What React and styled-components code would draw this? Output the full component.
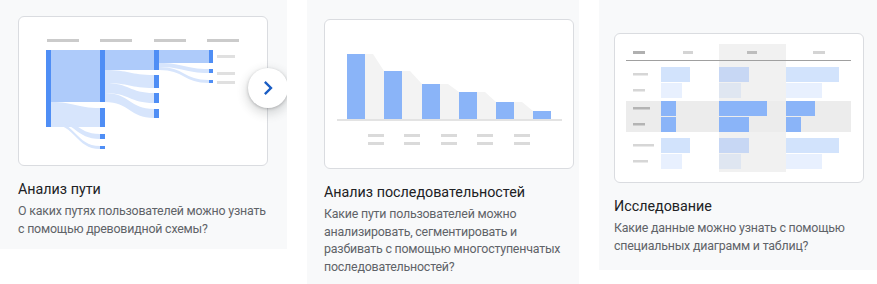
import React from "react";
import styled, { createGlobalStyle } from "styled-components";

const GlobalStyle = createGlobalStyle`
  html, body {
    margin: 0;
    padding: 0;
    background: #fff;
  }
  body {
    font-family: Roboto, "Noto Sans", Arial, sans-serif;
  }
`;

const Strip = styled.div`
  display: flex;
  align-items: flex-start;
  gap: 20px;
  width: 877px;
  height: 284px;
  overflow: hidden;
`;

const Card = styled.div`
  position: relative;
  flex: none;
  box-sizing: border-box;
  width: ${p => p.$w}px;
  padding: ${p => p.$pt}px ${p => p.$pr}px ${p => p.$pb}px ${p => p.$pl}px;
  background: #f8f9fa;
  overflow: hidden;
`;

const Preview = styled.div`
  width: 248px;
  height: 148px;
  border: 1px solid #dadce0;
  border-radius: 6px;
  background: #fff;
  overflow: hidden;

  svg {
    display: block;
  }
`;

const Title = styled.h3`
  margin: 13px 0 0;
  font-size: 14.3px;
  line-height: 20px;
  font-weight: 400;
  color: #202124;
`;

const Text = styled.p`
  margin: 3px 0 0;
  font-size: 12.4px;
  letter-spacing: -0.2px;
  line-height: 17.6px;
  color: #5f6368;
`;

const NextButton = styled.button`
  position: absolute;
  left: 248px;
  top: 68px;
  width: 40px;
  height: 40px;
  padding: 0;
  border: none;
  border-radius: 50%;
  background: #fff;
  box-shadow: 0 1px 3px rgba(60, 64, 67, 0.3), 0 4px 8px 3px rgba(60, 64, 67, 0.15);
  display: flex;
  align-items: center;
  justify-content: center;
  cursor: pointer;
`;

const flow = (x1, x2, s0, s1, t0, t1) => {
  const m = (x1 + x2) / 2;
  return `M${x1} ${s0} C${m} ${s0} ${m} ${t0} ${x2} ${t0} L${x2} ${t1} C${m} ${t1} ${m} ${s1} ${x1} ${s1} Z`;
};

const NODE = "#4f8ef5";
const FLOW_MAIN = "#aecbfa";
const FLOW_SIDE = "#d7e5fc";

const sankeyFlows = [
  [33, 82, 34, 86, 34, 86, FLOW_MAIN],
  [33, 82, 86, 111, 92, 111, FLOW_SIDE],
  [33, 82, 100, 105, 118, 123, FLOW_SIDE],
  [33, 82, 105, 108, 130, 133, FLOW_SIDE],
  [87, 136, 34, 54, 34, 54, FLOW_MAIN],
  [87, 136, 54, 67, 59, 72, FLOW_SIDE],
  [87, 136, 67, 77, 77, 87, FLOW_SIDE],
  [87, 136, 77, 86, 93, 102, FLOW_SIDE],
  [141, 191, 34, 47, 34, 47, FLOW_MAIN],
  [141, 191, 47, 51, 53, 57, FLOW_SIDE],
  [141, 191, 51, 54, 64, 67, FLOW_SIDE],
];

const sankeyNodes = [
  [28, 34, 111],
  [82, 34, 86], [82, 92, 111], [82, 118, 123], [82, 130, 133],
  [136, 34, 54], [136, 59, 72], [136, 77, 87], [136, 93, 102],
  [191, 34, 47], [191, 53, 57], [191, 64, 67],
];

const PathChart = () => (
  <svg width="248" height="148" viewBox="1 1 248 148">
    {[29, 82, 136, 189].map(x => (
      <rect key={x} x={x} y="23" width="32" height="3" fill="#cbcbcb" />
    ))}
    {sankeyFlows.map(([x1, x2, s0, s1, t0, t1, c], i) => (
      <path key={i} d={flow(x1, x2, s0, s1, t0, t1)} fill={c} />
    ))}
    {sankeyNodes.map(([x, y0, y1], i) => (
      <rect key={i} x={x} y={y0} width={i > 8 ? 4 : 5} height={y1 - y0} fill={NODE} />
    ))}
    {[39, 56, 65].map(y => (
      <rect key={y} x="199" y={y} width="18" height="3" fill="#e0e0e0" />
    ))}
  </svg>
);

const bars = [
  [23, 35], [60, 52], [98, 65], [135, 73], [172, 83], [209, 92],
];

const SequenceChart = () => (
  <svg width="248" height="148" viewBox="1 1 248 148">
    {bars.slice(0, -1).map(([x, top], i) => {
      const [nx, ntop] = bars[i + 1];
      return (
        <polygon
          key={x}
          points={`${x + 18},${top} ${x + 26},${top} ${nx},${ntop} ${nx},101 ${x + 18},101`}
          fill="#f3f3f3"
        />
      );
    })}
    {bars.map(([x, top]) => (
      <rect key={x} x={x} y={top} width="18" height={101 - top} fill="#8ab4f8" />
    ))}
    <rect x="13" y="100" width="225" height="2" fill="#e3e3e3" />
    {[44, 80, 117, 153, 190].map(x => (
      <g key={x} fill="#dadada">
        <rect x={x} y="115" width="16" height="3" />
        <rect x={x} y="123" width="16" height="3" />
      </g>
    ))}
  </svg>
);

const rowsY = [34, 50, 68, 84, 105, 121];
const labelW = [15, 12, 17, 12, 21, 15];
const colA = [29, 21, 15, 15, 29, 21];
const colB = [30, 22, 48, 30, 30, 22];
const colC = [53, 36, 29, 15, 53, 36];
const tint = ["#d2e3fc", "#e8f0fe", "#8ab4f8", "#8ab4f8", "#d2e3fc", "#e8f0fe"];
const tintB = ["#c7d7f4", "#dfe6f1", "#8ab4f8", "#8ab4f8", "#c7d7f4", "#dfe6f1"];

const ExploreChart = () => (
  <svg width="248" height="148" viewBox="1 1 248 148">
    <rect x="105" y="11" width="67" height="128" fill="#f1f1f1" />
    <rect x="12" y="68" width="225" height="31" fill="#ececec" />
    <rect x="19" y="18" width="12" height="3" fill="#b0b0b0" />
    <rect x="69" y="18" width="10" height="3" fill="#d4d4d4" />
    <rect x="133" y="18" width="10" height="3" fill="#bdbdbd" />
    <rect x="199" y="18" width="12" height="3" fill="#d4d4d4" />
    <rect x="12" y="27" width="225" height="1" fill="#a0a0a0" />
    {rowsY.map((y, i) => (
      <g key={y}>
        <rect x="19" y={y + 6} width={labelW[i]} height="2.5" fill={i === 2 || i === 3 ? "#b4b4b4" : "#d6d6d6"} />
        <rect x="47" y={y} width={colA[i]} height="15" fill={tint[i]} />
        <rect x="105" y={y} width={colB[i]} height="15" fill={tintB[i]} />
        <rect x="172" y={y} width={colC[i]} height="15" fill={tint[i]} />
      </g>
    ))}
  </svg>
);

const cards = [
  {
    key: "path",
    layout: { $w: 287, $pt: 16, $pl: 18, $pr: 19, $pb: 12 },
    chart: <PathChart />,
    title: "Анализ пути",
    text: "О каких путях пользователей можно узнать с помощью древовидной схемы?",
    next: true,
  },
  {
    key: "funnel",
    layout: { $w: 272, $pt: 19, $pl: 17, $pr: 5, $pb: 20 },
    chart: <SequenceChart />,
    title: "Анализ последовательностей",
    text: "Какие пути пользователей можно анализировать, сегментировать и разбивать с помощью многоступенчатых последовательностей?",
  },
  {
    key: "explore",
    layout: { $w: 278, $pt: 33, $pl: 15, $pr: 13, $pb: 16 },
    chart: <ExploreChart />,
    title: "Исследование",
    text: "Какие данные можно узнать с помощью специальных диаграмм и таблиц?",
  },
];

export default function App() {
  return (
    <>
      <GlobalStyle />
      <Strip>
        {cards.map(card => (
          <Card key={card.key} {...card.layout}>
            <Preview>{card.chart}</Preview>
            <Title>{card.title}</Title>
            <Text>{card.text}</Text>
            {card.next && (
              <NextButton aria-label="Далее">
                <svg width="28" height="28" viewBox="0 0 24 24">
                  <path d="M10 6L8.59 7.41 13.17 12l-4.58 4.59L10 18l6-6z" fill="#1a5dc4" />
                </svg>
              </NextButton>
            )}
          </Card>
        ))}
      </Strip>
    </>
  );
}
